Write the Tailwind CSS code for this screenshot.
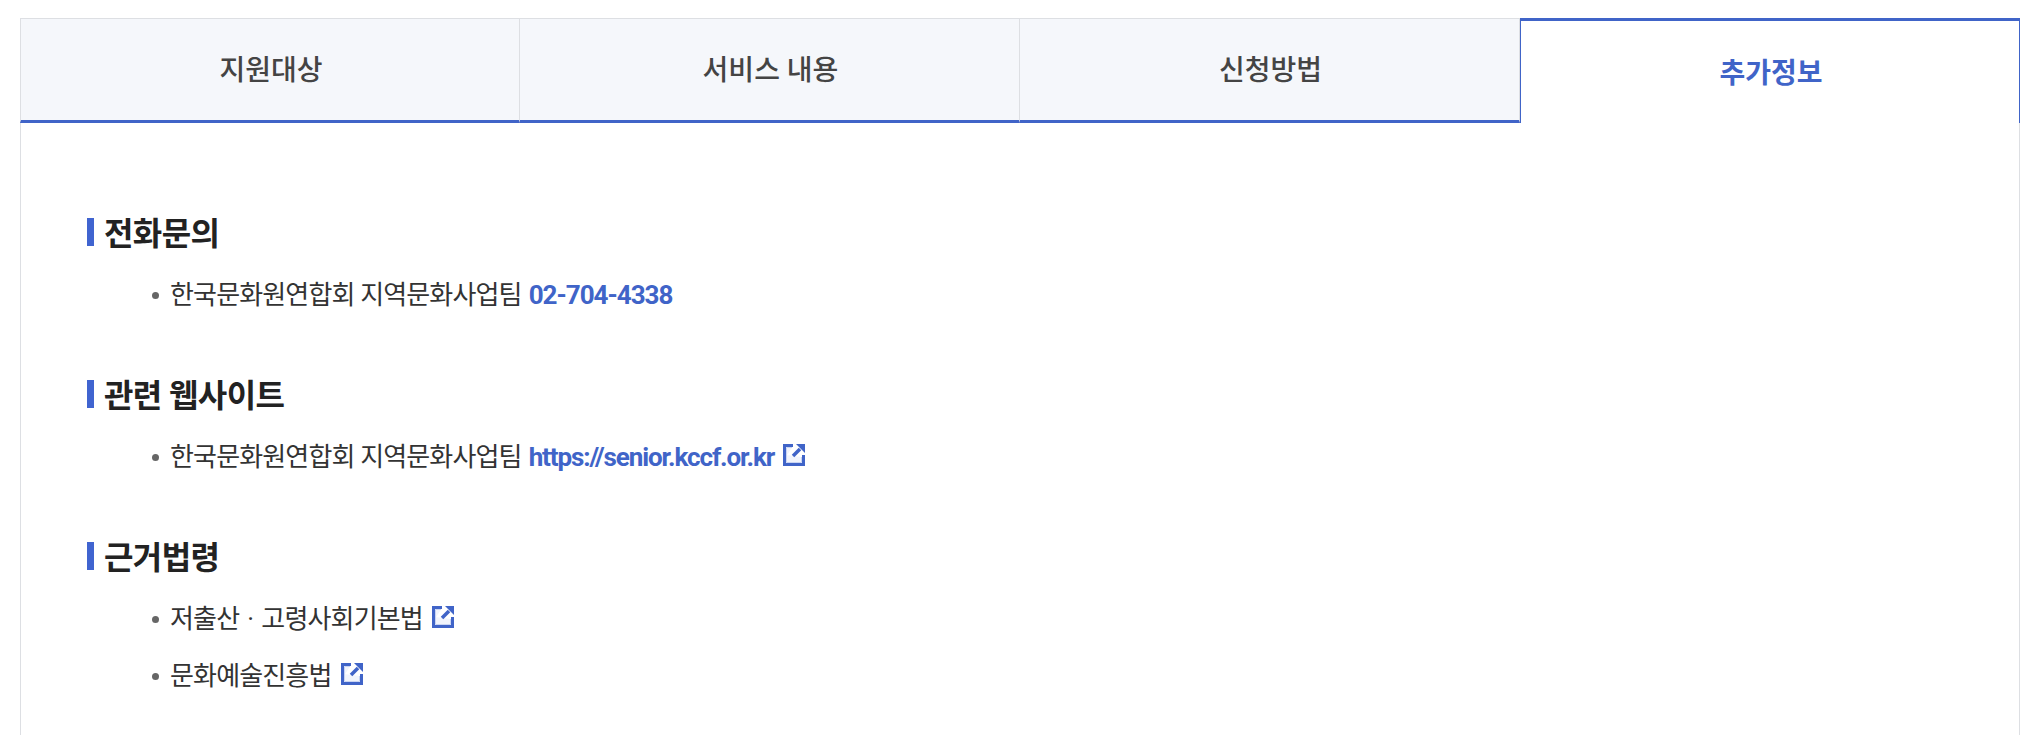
<!DOCTYPE html>
<html lang="ko">
<head>
<meta charset="utf-8">
<script src="https://cdn.jsdelivr.net/npm/@tailwindcss/browser@4"></script>
</head>
<body class="bg-white overflow-hidden font-['Roboto','Noto_Sans_CJK_KR',sans-serif]">
<div class="w-[2000px] ml-5 mt-[18px]">
  <div class="flex h-[105px] text-[28px]">
    <div class="w-[500px] pt-[3px] pl-[2px] flex items-center justify-center bg-[#f5f7fb] border-t border-l border-r border-[#dddfe3] border-b-[3px] border-b-[#4064c8] text-[#444] font-medium">지원대상</div>
    <div class="w-[500px] pt-[3px] pl-[2px] flex items-center justify-center bg-[#f5f7fb] border-t border-r border-[#dddfe3] border-b-[3px] border-b-[#4064c8] text-[#444] font-medium">서비스 내용</div>
    <div class="w-[500px] pt-[3px] pl-[2px] flex items-center justify-center bg-[#f5f7fb] border-t border-r border-[#dddfe3] border-b-[3px] border-b-[#4064c8] text-[#444] font-medium">신청방법</div>
    <div class="w-[500px] pt-[3px] pl-[2px] flex items-center justify-center bg-white border-t-[3px] border-x border-[#4064c8] text-[#4064c8] font-bold">추가정보</div>
  </div>
  <div class="border-x border-[#dddfe3] pl-[66px] pt-[95px] h-[620px] text-[#222]">
    <section class="h-[162px]">
      <h2 class="flex items-center h-[28px] text-[32px] font-bold tracking-[-0.6px] text-[#222]"><span class="w-[7px] h-[28px] bg-[#4064d0] mr-[10px]"></span><span class="relative top-[2px]">전화문의</span></h2>
      <ul class="mt-[21px] pl-[83px] text-[26px] tracking-[-0.85px]">
        <li class="relative h-[57px] flex items-center text-[#333]"><span class="absolute -left-[18px] top-[25px] size-[7px] rounded-full bg-[#666]"></span>한국문화원연합회 지역문화사업팀<b class="ml-[7px] text-[#4064c8] font-bold tracking-[-1px]">02-704-4338</b></li>
      </ul>
    </section>
    <section class="h-[162px]">
      <h2 class="flex items-center h-[28px] text-[32px] font-bold tracking-[-0.6px] text-[#222]"><span class="w-[7px] h-[28px] bg-[#4064d0] mr-[10px]"></span><span class="relative top-[2px]">관련 웹사이트</span></h2>
      <ul class="mt-[21px] pl-[83px] text-[26px] tracking-[-0.85px]">
        <li class="relative h-[57px] flex items-center text-[#333]"><span class="absolute -left-[18px] top-[25px] size-[7px] rounded-full bg-[#666]"></span>한국문화원연합회 지역문화사업팀<b class="ml-[7px] text-[#4064c8] font-bold tracking-[-1.1px]">https://senior.kccf.or.kr</b>
          <svg class="ml-[9px] -mt-[6px]" width="22" height="22" viewBox="0 0 22 22" fill="none"><path d="M3.5 11V18.500H18.500V13M3.500 12V3.500H9" stroke="#c9d4f2" stroke-width="1" fill="#f1f4fc"/><path d="M10 1.500H1.500v19h19V11" stroke="#4064c8" stroke-width="3"/><path d="M10 12l7-7" stroke="#4064c8" stroke-width="3.500"/><path d="M13 0h9v9z" fill="#4064c8"/></svg></li>
      </ul>
    </section>
    <section>
      <h2 class="flex items-center h-[28px] text-[32px] font-bold tracking-[-0.6px] text-[#222]"><span class="w-[7px] h-[28px] bg-[#4064d0] mr-[10px]"></span><span class="relative top-[2px]">근거법령</span></h2>
      <ul class="mt-[21px] pl-[83px] text-[26px] tracking-[-0.85px]">
        <li class="relative h-[57px] flex items-center text-[#333]"><span class="absolute -left-[18px] top-[25px] size-[7px] rounded-full bg-[#666]"></span><span>저출산 <span class="mx-[2.5px]">·</span> 고령사회기본법</span>
          <svg class="ml-[9px] -mt-[6px]" width="22" height="22" viewBox="0 0 22 22" fill="none"><path d="M3.5 11V18.500H18.500V13M3.500 12V3.500H9" stroke="#c9d4f2" stroke-width="1" fill="#f1f4fc"/><path d="M10 1.500H1.500v19h19V11" stroke="#4064c8" stroke-width="3"/><path d="M10 12l7-7" stroke="#4064c8" stroke-width="3.500"/><path d="M13 0h9v9z" fill="#4064c8"/></svg></li>
        <li class="relative h-[57px] flex items-center text-[#333]"><span class="absolute -left-[18px] top-[25px] size-[7px] rounded-full bg-[#666]"></span>문화예술진흥법
          <svg class="ml-[9px] -mt-[6px]" width="22" height="22" viewBox="0 0 22 22" fill="none"><path d="M3.5 11V18.500H18.500V13M3.500 12V3.500H9" stroke="#c9d4f2" stroke-width="1" fill="#f1f4fc"/><path d="M10 1.500H1.500v19h19V11" stroke="#4064c8" stroke-width="3"/><path d="M10 12l7-7" stroke="#4064c8" stroke-width="3.500"/><path d="M13 0h9v9z" fill="#4064c8"/></svg></li>
      </ul>
    </section>
  </div>
</div>
</body>
</html>
